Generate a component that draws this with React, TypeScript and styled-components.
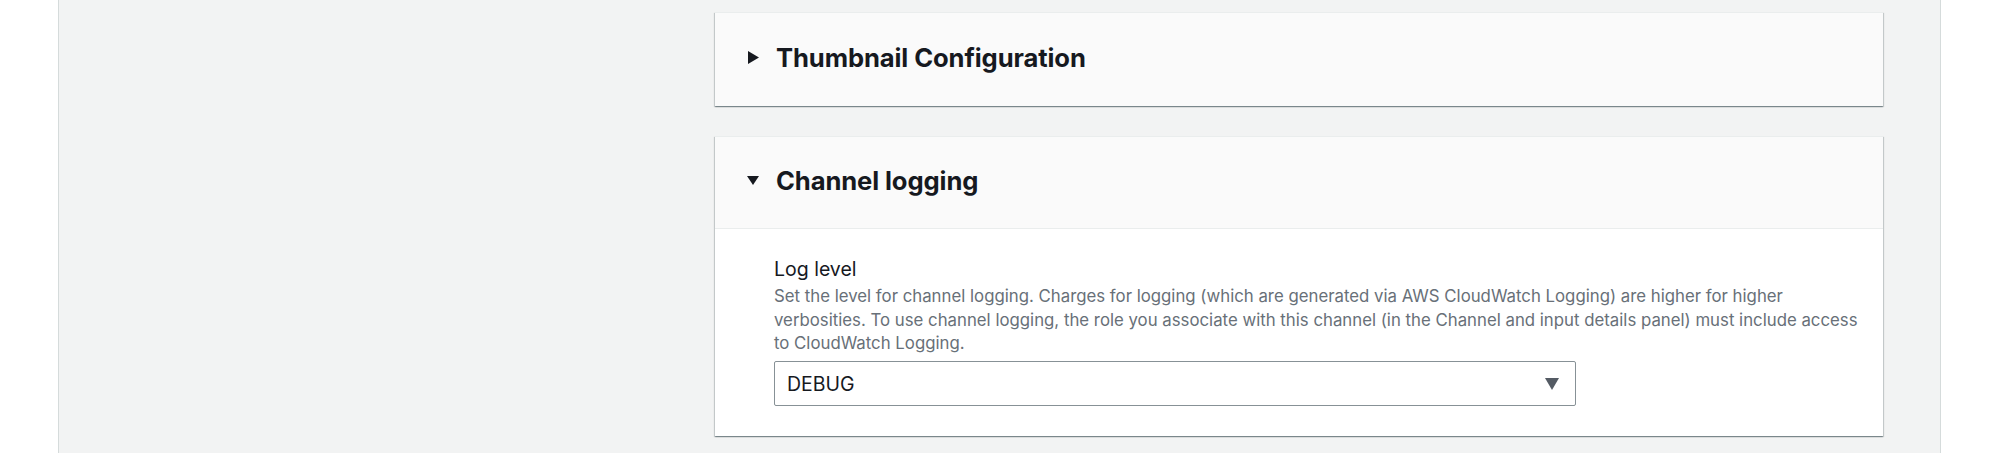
import React from "react";
import styled, { createGlobalStyle } from "styled-components";

const GlobalStyle = createGlobalStyle`
  html, body {
    margin: 0;
    padding: 0;
    background: #ffffff;
    font-family: Inter, "Noto Sans", sans-serif;
    color: #16191f;
  }
`;

const Page = styled.div`
  padding-left: 58px;
  width: 1883px;
`;

const Panel = styled.main`
  background-color: #f2f3f3;
  border-left: 1px solid #d5dbdb;
  border-right: 1px solid #d5dbdb;
  min-height: 453px;
  box-sizing: border-box;
  padding: 12px 57px 0 656px;
  display: flex;
  flex-direction: column;
  gap: 30px;
`;

const Card = styled.section`
  background-color: #ffffff;
  box-shadow: 0 1px 1px 0 rgba(0, 28, 36, 0.3), 1px 1px 1px 0 rgba(0, 28, 36, 0.15),
    -1px 1px 1px 0 rgba(0, 28, 36, 0.15);
  border-top: 1px solid #eaeded;
`;

const Header = styled.div<{ $open?: boolean }>`
  background-color: #fafafa;
  height: ${(p) => (p.$open ? "92px" : "93px")};
  box-sizing: border-box;
  padding: 0 0 5px 32px;
  display: flex;
  align-items: center;
  gap: 17px;
  border-bottom: ${(p) => (p.$open ? "1px solid #eaeded" : "none")};
`;

const Caret = styled.span`
  width: 12px;
  height: 14px;
  display: flex;
  align-items: center;
  justify-content: center;
  color: #16191f;
`;

const Title = styled.h2`
  margin: 0;
  font-size: 25.6px;
  font-weight: 700;
  letter-spacing: -0.1px;
  color: #16191f;
`;

const Body = styled.div`
  padding: 28px 20px 30px 59px;
`;

const Label = styled.div`
  font-size: 19.5px;
  line-height: 24px;
  margin-bottom: 4px;
  color: #16191f;
`;

const Description = styled.p`
  margin: 0 0 5.5px;
  font-size: 16.8px;
  line-height: 23.5px;
  color: #687078;
`;

const Select = styled.div`
  width: 802px;
  height: 45px;
  box-sizing: border-box;
  border: 1px solid #879196;
  border-radius: 2px;
  display: flex;
  align-items: center;
  justify-content: space-between;
  padding: 0 16px 0 12px;
  font-size: 19.5px;
  color: #16191f;
`;

function TriangleRight() {
  return (
    <svg width="11" height="13" viewBox="0 0 11 13">
      <path d="M0 0 L11 6.5 L0 13 Z" fill="currentColor" />
    </svg>
  );
}

function TriangleDown({ color = "currentColor", w = 12, h = 9 }: { color?: string; w?: number; h?: number }) {
  return (
    <svg width={w} height={h} viewBox={`0 0 ${w} ${h}`}>
      <path d={`M0 0 L${w} 0 L${w / 2} ${h} Z`} fill={color} />
    </svg>
  );
}

export default function App() {
  return (
    <>
      <GlobalStyle />
      <Page>
        <Panel>
          <Card>
            <Header>
              <Caret>
                <TriangleRight />
              </Caret>
              <Title>Thumbnail Configuration</Title>
            </Header>
          </Card>
          <Card>
            <Header $open>
              <Caret>
                <TriangleDown />
              </Caret>
              <Title>Channel logging</Title>
            </Header>
            <Body>
              <Label>Log level</Label>
              <Description>
                Set the level for channel logging. Charges for logging (which are generated via AWS CloudWatch
                Logging) are higher for higher verbosities. To use channel logging, the role you associate with
                this channel (in the Channel and input details panel) must include access to CloudWatch Logging.
              </Description>
              <Select>
                <span>DEBUG</span>
                <TriangleDown color="#545b64" w={14} h={12} />
              </Select>
            </Body>
          </Card>
        </Panel>
      </Page>
    </>
  );
}
